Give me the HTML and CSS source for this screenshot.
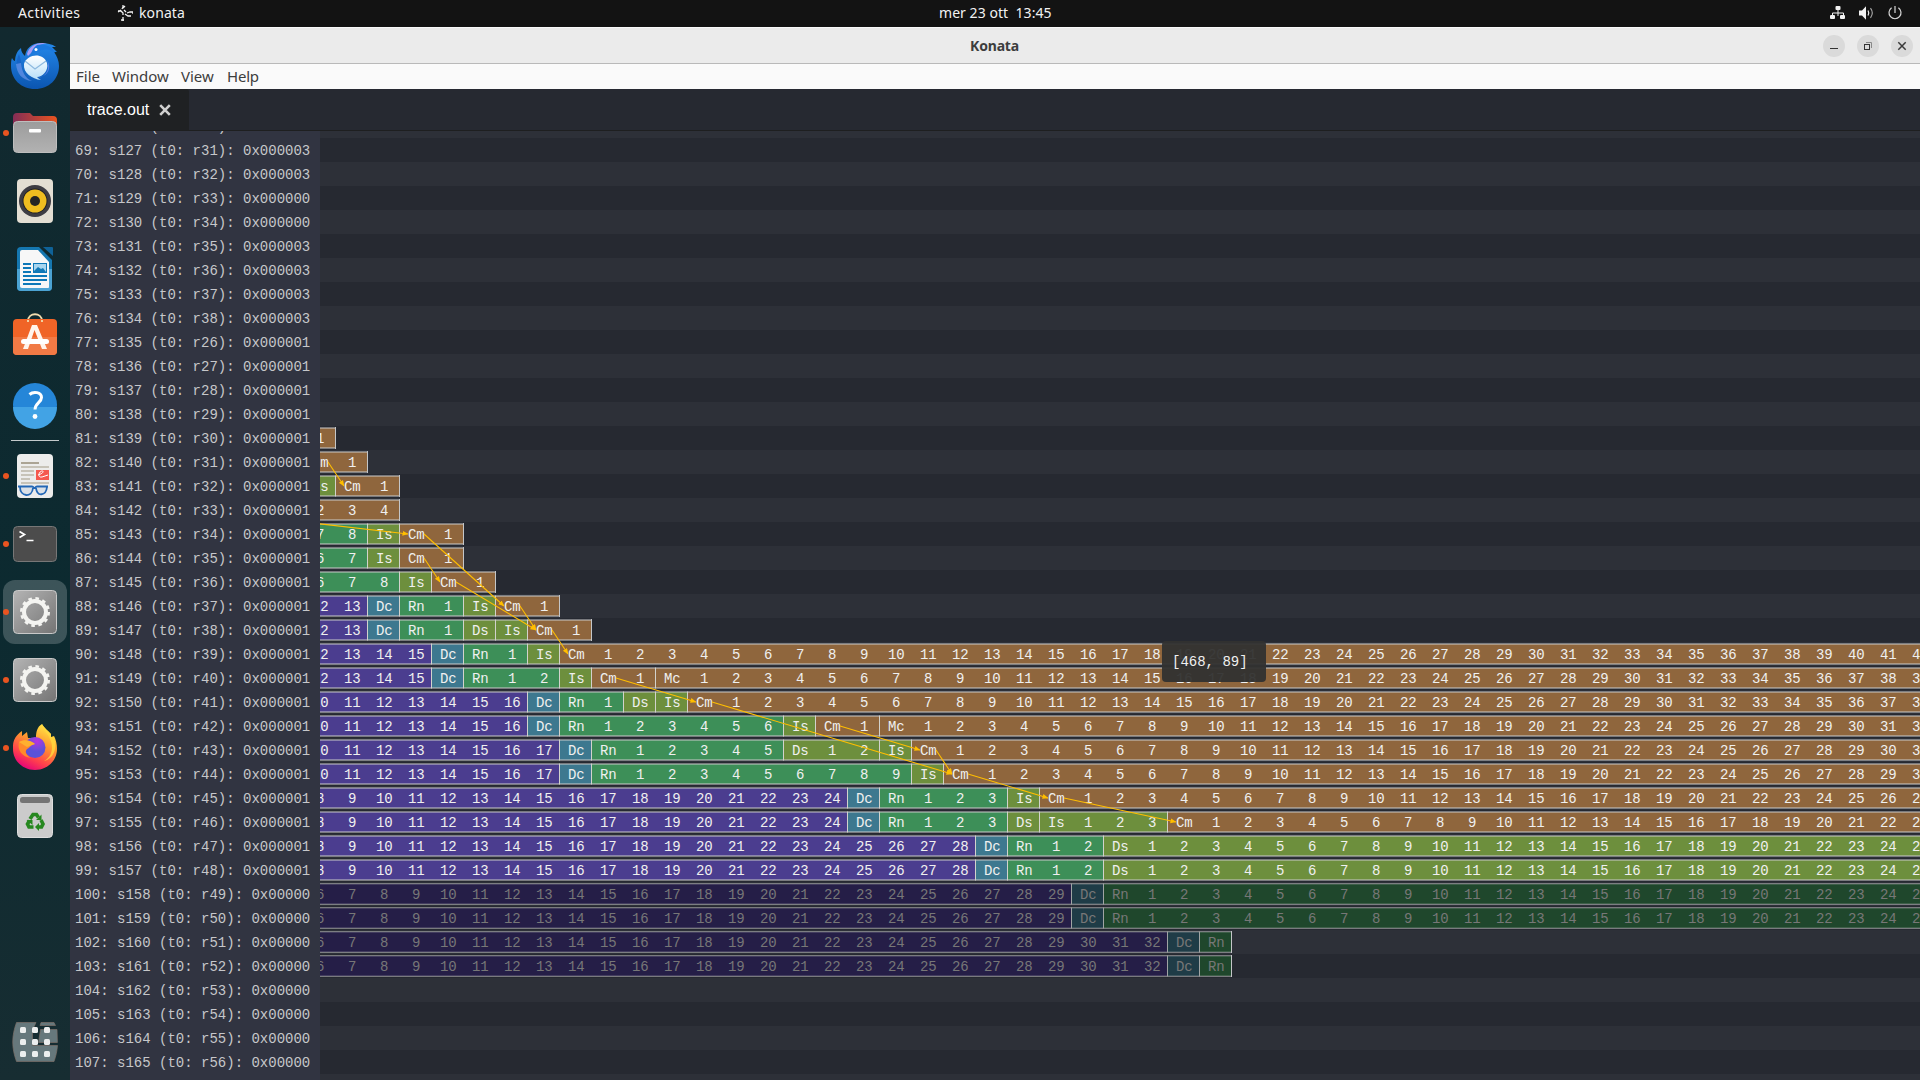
FILE: index.html
```html
<!DOCTYPE html>
<html lang="it">
<head>
<meta charset="utf-8">
<title>Konata</title>
<link rel="stylesheet" href="styles.css">
</head>
<body>
<header class="topbar">
  <span class="activities">Activities</span>
  <svg class="app-glyph" viewBox="0 0 16 16"><path d="M1 6h3l2 2v2M6 0v2L5 4M7 5l2 2M6 12v4M4 15h3M10 8l3-1h3v2M8 9l3 2h3M4 5L1 7M8 1L6 3" fill="none" stroke="#f2f2f2" stroke-width="1.3"/></svg>
  <span class="app-name">konata</span>
  <span class="clock">mer 23 ott&nbsp; 13:45</span>
  <div class="tray">
    <svg width="16" height="14" viewBox="0 0 16 14"><path d="M8 3v7M2.500 10V7h11v3" fill="none" stroke="#f2f2f2" stroke-width="1"/><rect x="5.500" y="0" width="5" height="4" rx="1" fill="#f2f2f2"/><rect x="0" y="9" width="5" height="4" rx="1" fill="#f2f2f2"/><rect x="10" y="9" width="5" height="4" rx="1" fill="#f2f2f2"/></svg>
    <svg width="16" height="14" viewBox="0 0 16 14"><path d="M0 4.500h3L7 .3v13.400L3 9.500H0z" fill="#f2f2f2"/><path d="M9 4.500q1.600 2.500 0 5" fill="none" stroke="#f2f2f2" stroke-width="1.200"/><path d="M11.500 2.200q3.600 4.800 0 9.600" fill="none" stroke="#aaa" stroke-width="1.100"/></svg>
    <svg width="14" height="14" viewBox="0 0 14 14"><path d="M3.600 1.800a6 6 0 1 0 6.800 0M7 0v7" fill="none" stroke="#d8d8d8" stroke-width="1.200"/></svg>
  </div>
</header>
<div class="desktop">
  <nav class="dock">
    <div class="launcher"><svg viewBox="0 0 48 48">
      <defs><linearGradient id="bird" x1="0" y1="0" x2="0" y2="1"><stop offset="0" stop-color="#2488ea"/><stop offset="1" stop-color="#0b55b0"/></linearGradient>
      <linearGradient id="mail" x1="0" y1="0" x2="0" y2="1"><stop offset="0" stop-color="#fff"/><stop offset="1" stop-color="#b5def8"/></linearGradient></defs>
      <path d="M1 17c1 2 2 3 3 3 0-5 2-10 6-13 0 4 2 6 4 8 1-7 6-13 16-13 6 0 11 1 15 4l-4 0 5 5-3 0c3 4 5 9 5 14 0 13-10 23-24 23S0 38 0 25c0-3 0-6 1-8z" fill="url(#bird)"/>
      <path d="M16 13c2-7 8-11 15-11h5c-7 1-12 4-15 9l-4 4z" fill="#a79cf5"/>
      <path d="M26 4c8-2 16 2 18 8-6-5-12-4-19-1l-5 2c1-4 3-7 6-9z" fill="#1b78df"/>
      <path d="M8 13c-4 8-3 17 5 23-3-8-2-15-5-23z" fill="#1565c8"/>
      <path d="M5 23c1 10 6 16 16 17-7-3-10-9-11-18z" fill="#8ba7f6" opacity=".5"/>
      <path d="M36 19c4 10-2 19-13 18 12 0 19-8 13-18z" fill="#7c8cf0" opacity=".7"/>
      <path d="M13 23c3-10 19-12 23-1 2 8-5 14-10 14 1 1 2 2 4 3-9-1-18-7-17-16z" fill="url(#mail)"/>
      <path d="M14 20l10 8 11-8" fill="none" stroke="#8db9df" stroke-width="1.200"/>
      <circle cx="25" cy="8.500" r="1.500" fill="#fff"/></svg></div>
    <div class="launcher running"><svg viewBox="0 0 48 48">
      <defs><linearGradient id="fold" x1="0" x2="1"><stop offset="0" stop-color="#842d56"/><stop offset="1" stop-color="#e95420"/></linearGradient>
      <linearGradient id="gray" x1="0" y1="0" x2="1" y2="1"><stop offset="0" stop-color="#b4b4b4"/><stop offset="1" stop-color="#747474"/></linearGradient>
      <linearGradient id="drawer" x1="0" y1="0" x2="0" y2="1"><stop offset="0" stop-color="#9c9c9c"/><stop offset="1" stop-color="#b2b2b2"/></linearGradient></defs>
      <path d="M2 8q0-4 4-4h13l3 3h20q4 0 4 4v12H2z" fill="url(#fold)"/>
      <rect x="2.500" y="12.500" width="43" height="31" rx="4" fill="url(#drawer)" stroke="#bebebe"/>
      <rect x="18" y="20" width="12" height="3.500" rx="1" fill="#fff"/></svg></div>
    <div class="launcher"><svg viewBox="0 0 48 48">
      <rect x="6" y="2" width="36" height="44" rx="4" fill="#e3ded3"/>
      <circle cx="24" cy="24" r="16" fill="#3e3d44"/><circle cx="24" cy="24" r="12.500" fill="#202127"/><circle cx="24" cy="24" r="11.500" fill="#efbd20"/><circle cx="24" cy="24" r="5" fill="#242424"/></svg></div>
    <div class="launcher"><svg viewBox="0 0 48 48">
      <path d="M10 2h18l13 13v27q0 4-4 4H10q-4 0-4-4V6q0-4 4-4z" fill="#1577b0"/>
      <path d="M6 24h35v18q0 4-4 4H10q-4 0-4-4z" fill="#4ba3d3"/>
      <path d="M11 5h16l11 12v25q0 1-1 1H11q-2 0-2-2V7q0-2 2-2z" fill="#f7f7f7"/>
      <path d="M32 2h9q1 0 1 1v8z" fill="#0f6297"/>
      <path d="M12 19h8M12 23h8M12 27h8M12 31h24M12 35h24M12 39h18" stroke="#0d78b8" stroke-width="2"/>
      <rect x="22.500" y="18.500" width="13" height="9" fill="#a9d6ef" stroke="#0d78b8"/><path d="M23 26l4-4 3 2 2-1 3 4H23z" fill="#1279b7"/></svg></div>
    <div class="launcher"><svg viewBox="0 0 48 48">
      <path d="M17 8c0-9 14-9 14 0" fill="none" stroke="#f0dcae" stroke-width="1.800"/>
      <rect x="2" y="6" width="44" height="36" rx="4" fill="#f06427"/><path d="M2 24h44v14q0 4-4 4H6q-4 0-4-4z" fill="#f17a45"/>
      <path d="M17 7v2M31 7v2" stroke="#f0dcae" stroke-width="1.800"/>
      <path d="M21 12h5l10 24h-5L23.500 17 17 36h-5z" fill="#fff4ec"/><rect x="10" y="26" width="28" height="5" rx="2.500" fill="#fff"/></svg></div>
    <div class="launcher"><svg viewBox="0 0 48 48">
      <circle cx="24" cy="24" r="22" fill="#2586d8"/><path d="M2 26h44a22 22 0 0 1-44 0z" fill="#42a3e5"/>
      <path d="M18.500 13.500c4-3.500 12-2.500 12 3 0 5-6.500 5.500-6.500 12" fill="none" stroke="#fff" stroke-width="3"/><circle cx="24" cy="35.500" r="2.400" fill="#fff"/></svg></div>
    <div class="divider"></div>
    <div class="launcher running"><svg viewBox="0 0 48 48">
      <rect x="6" y="2" width="36" height="44" rx="4" fill="#ececeb"/>
      <path d="M10 11h18" stroke="#aba494" stroke-width="2"/><path d="M10 15h28M10 19h13M10 23h13M10 27h9M10 31h28" stroke="#c7c3b8" stroke-width="2"/>
      <rect x="25" y="18" width="13" height="10" fill="#f5584e"/><path d="M27 23c4-1 7-4 4-4s-5 7 0 6l6-2" fill="none" stroke="#fff"/>
      <path d="M7 34.500h14q1 0 2 1.500h1q1-1.500 2-1.500h11M9 35c0 10 12 11 13 1M25 36c1 9 10 8 11-1" fill="#cfd9e4" fill-opacity=".6" stroke="#2367b5" stroke-width="1.800"/></svg></div>
    <div class="launcher running"><svg viewBox="0 0 48 48">
      <rect x="2.500" y="6.500" width="43" height="35" rx="4" fill="#4c4c4c" stroke="#777"/>
      <path d="M8.500 11.500l5 3-5 3M15.500 20.500h7" fill="none" stroke="#fff" stroke-width="1.700"/></svg></div>
    <div class="launcher running focused"><svg viewBox="0 0 48 48"><rect x="2.500" y="2.500" width="43" height="43" rx="4" fill="url(#gray)" stroke="#c9c9c9"/><circle cx="24" cy="24" r="11" fill="none" stroke="#f4f4f1" stroke-width="4"/><circle cx="24" cy="24" r="13.700" fill="none" stroke="#f4f4f1" stroke-width="2.600" stroke-dasharray="3.600 3.573"/></svg></div>
    <div class="launcher running"><svg viewBox="0 0 48 48"><rect x="2.500" y="2.500" width="43" height="43" rx="4" fill="url(#gray)" stroke="#c9c9c9"/><circle cx="24" cy="24" r="11" fill="none" stroke="#f4f4f1" stroke-width="4"/><circle cx="24" cy="24" r="13.700" fill="none" stroke="#f4f4f1" stroke-width="2.600" stroke-dasharray="3.600 3.573"/></svg></div>
    <div class="launcher running"><svg viewBox="0 0 48 48">
      <defs><linearGradient id="fox" x1=".8" y1="0" x2=".3" y2="1"><stop offset="0" stop-color="#fff04a"/><stop offset=".4" stop-color="#ff9a2e"/><stop offset=".75" stop-color="#ff3f4d"/><stop offset="1" stop-color="#e4007c"/></linearGradient>
      <radialGradient id="globe" cx=".6" cy=".2"><stop offset="0" stop-color="#b833e1"/><stop offset="1" stop-color="#5b52d8"/></radialGradient></defs>
      <path d="M2 22c0-6 3-11 9-15l0 5 5-4 1 6h8c0-6 1-11 6-14 3 5 6 6 9 10v3l3-1c2 4 3 8 3 13 0 12-10 21-22 21S2 37 2 25z" fill="url(#fox)"/>
      <path d="M31 0c0 6 6 9 8 15 4 8 2 18-6 22 9-2 14-12 10-24l-3 0v-3C36 7 33 4 31 0z" fill="#ffd83d" opacity=".8"/>
      <circle cx="24" cy="23.500" r="10.500" fill="url(#globe)"/>
      <path d="M8 18c5-3 9-2 16 2-4 0-5 4-8 5-3 3 0 7 4 9C11 33 6 26 8 18z" fill="#ff8a2a"/><path d="M8 18c5-3 12-2 16 2l-8 3z" fill="#ffb02f"/></svg></div>
    <div class="launcher"><svg viewBox="0 0 48 48">
      <rect x="6.500" y="2.500" width="35" height="43" rx="4" fill="#cbcbcb" stroke="#dedede"/><rect x="9" y="5" width="30" height="6" rx="2.500" fill="#747474"/>
      <g fill="none" stroke="#26881f" stroke-width="3.600"><path d="M19 27l3-4.500h3.500l2 3"/><path d="M30 28l2 4-1.500 3h-3"/><path d="M22.500 35H18l-1.500-3 2-3.500"/></g><path d="M30.500 22.500V28H25zM28 31v8l-4-4zM15.500 28h6v5z" fill="#26881f"/></svg></div>
    <div class="launcher app-grid"><svg viewBox="0 0 48 48">
      <path d="M5.500 4.500H25L21.500 12v15.500H46.500C46 33 45 38 43 43.500H5.500C.5 30 .5 18 5.500 4.500zM30 4.500H43l1.500 3H29zM29.500 11.500H46l.4 13H27.500z" fill="#66787c" stroke="#7d7068" stroke-width=".7"/>
      <g fill="#eceeee"><rect x="9" y="9" width="6" height="6" rx="1.500"/><rect x="21" y="9" width="6" height="6" rx="1.500"/><rect x="33" y="9" width="6" height="6" rx="1.500"/><rect x="9" y="21" width="6" height="6" rx="1.500"/><rect x="21" y="21" width="6" height="6" rx="1.500"/><rect x="33" y="21" width="6" height="6" rx="1.500"/><rect x="9" y="33" width="6" height="6" rx="1.500"/><rect x="21" y="33" width="6" height="6" rx="1.500"/><rect x="33" y="33" width="6" height="6" rx="1.500"/></g></svg></div>
  </nav>
  <main class="window">
    <div class="titlebar">
      <span class="title">Konata</span>
      <div class="controls">
        <button class="control"><svg viewBox="0 0 22 22"><path d="M7 13.500h8" stroke="#333"/></svg></button>
        <button class="control"><svg viewBox="0 0 22 22"><rect x="7.500" y="9.500" width="5" height="5" fill="none" stroke="#333"/><path d="M9 7.500h5.500V13" fill="none" stroke="#888"/></svg></button>
        <button class="control"><svg viewBox="0 0 22 22"><path d="M7.300 7.300l7.400 7.400M14.700 7.300l-7.400 7.400" stroke="#3a3a3a" stroke-width="1.500"/></svg></button>
      </div>
    </div>
    <div class="menubar"><span class="m-file">File</span><span class="m-window">Window</span><span class="m-view">View</span><span class="m-help">Help</span></div>
    <div class="tabs">
      <div class="tab">trace.out<svg viewBox="0 0 12 12"><path d="M1.200 1.200l9.600 9.600M10.800 1.200L1.200 10.800" stroke="#d0d0d0" stroke-width="2.600"/></svg></div>
    </div>
    <div class="viewer">
      <div class="labels" id="labels"></div>
      <div class="timeline">
        <div class="rows" id="rows"></div>
        <svg class="arrows" id="arrows" width="1600" height="966"><defs><marker id="head" markerUnits="userSpaceOnUse" markerWidth="7" markerHeight="6" refX="5.500" refY="2.500" orient="auto"><path d="M0 0l6 2.500L0 5z" fill="#ffbe00"/></marker></defs></svg>
        <div class="tooltip">[468, 89]</div>
      </div>
    </div>
  </main>
</div>
<script src="app.js"></script>
</body>
</html>
```
FILE: styles.css
```css
* { box-sizing: border-box; }
body { margin: 0; width: 1920px; height: 1080px; overflow: hidden; background: #262931; font-family: "Noto Sans", sans-serif; display: flex; flex-direction: column; }
svg { display: block; }
.topbar { height: 27px; flex: none; background: #131313; color: #f2f2f2; display: flex; align-items: center; position: relative; font-size: 14px; line-height: 25px; padding: 0 18px 2px 18px; }
.activities { width: 62px; letter-spacing: 0.4px; margin-right: 37px; white-space: nowrap; }
.app-glyph { width: 16px; height: 16px; margin-right: 6px; }
.app-name { letter-spacing: 0.1px; }
.clock { position: absolute; top: 0; left: 939px; letter-spacing: 0.05px; white-space: nowrap; }
.tray { margin-left: auto; display: flex; gap: 13px; align-items: center; }
.desktop { flex: 1; min-height: 0; display: flex; }
.dock { width: 70px; flex: none; background: linear-gradient(180deg, #12292f, #0c2a30 55%, #172d32); display: flex; flex-direction: column; padding: 4px 0; }
.launcher { width: 70px; height: 68px; flex: none; display: flex; align-items: center; justify-content: center; position: relative; }
.launcher svg { width: 48px; height: 48px; position: relative; }
.running::before { content: ""; position: absolute; z-index: 1; left: 3px; top: 31px; width: 6px; height: 6px; border-radius: 50%; background: #e95420; }
.focused::after { content: ""; position: absolute; left: 3px; top: 2px; width: 64px; height: 64px; border-radius: 12px; background: rgba(255, 255, 255, 0.2); }
.focused svg { z-index: 1; }
.divider { height: 1px; margin: 1px 11px; flex: none; background: #c3cacb; }
.app-grid { margin-top: auto; }
.window { flex: 1; min-width: 0; display: flex; flex-direction: column; }
.titlebar { height: 37px; flex: none; background: #ebebeb; border-top: 1px solid #f8f8f8; border-bottom: 1px solid #b9b9b9; display: flex; align-items: center; justify-content: flex-end; position: relative; }
.title { position: absolute; left: 0; right: 1px; text-align: center; font-weight: 700; font-size: 14px; line-height: 34px; color: #3d3d3d; letter-spacing: -0.2px; }
.controls { display: flex; gap: 12px; padding-right: 7px; position: relative; }
.control { width: 22px; height: 22px; padding: 0; border: 0; border-radius: 50%; background: #dadada; }
.menubar { height: 25px; flex: none; background: #fafafa; color: #3d3d3d; font-size: 15px; line-height: 25px; display: flex; padding-left: 6px; }
.m-file { width: 36px; }
.m-window { width: 69px; }
.m-view { width: 46px; }
.m-help { letter-spacing: -0.2px; }
.tabs { height: 42px; flex: none; background: #262931; border-bottom: 1px solid #1e1f20; display: flex; }
.tab { width: 119px; background: #1f2123; border-radius: 0 3px 0 0; color: #fff; font: 16px/41px "Liberation Sans", Arial, sans-serif; padding-left: 17px; display: flex; align-items: center; }
.tab svg { width: 12px; height: 12px; margin-left: 10px; }
.viewer { flex: 1; min-height: 0; display: flex; overflow: hidden; font: 14px/24px "Liberation Mono", monospace; }
.labels { width: 250px; flex: none; background: #313441; color: #c6c7ca; padding-left: 5px; overflow: hidden; }
.label { height: 24px; line-height: 26px; white-space: pre; }
.label:first-child, .row:first-child { margin-top: -17px; }
.timeline { flex: 1; min-width: 0; overflow: hidden; position: relative; }
.row { height: 24px; padding-top: 1px; display: flex; background: #2d3038; }
.row.odd { background: #262931; }
.bar { display: flex; flex: none; margin-left: -17px; }
.bar.closed { border-right: 1px solid #c4c6c8; height: 22px; }
.stage { height: 22px; flex: none; display: flex; color: #f0f0f0; border: 1px solid rgba(204, 204, 204, 0.5); border-left-color: #d2d2cc; border-right: 0; background-clip: padding-box; box-shadow: inset 0 1px rgba(204, 204, 204, 0.5), inset 0 -1px rgba(204, 204, 204, 0.5); line-height: 22px; }
.cell { width: 32px; height: 20px; flex: none; text-align: center; padding-left: 2.6px; }
.cell:first-child { margin-left: -1px; }
.F { background-color: #4b3d8f; }
.Dc { background-color: #3d788f; }
.Rn { background-color: #3d8f58; }
.Ds, .Is { background-color: #6d8f3d; }
.Cm, .Mc { background-color: #8f663d; }
.flushed .stage { color: #777; box-shadow: inset 0 1px rgba(204, 204, 204, 0.18), inset 0 -1px rgba(204, 204, 204, 0.18); border-left-color: #a0a4a4; }
.flushed .F { background-color: #251e47; }
.flushed .Dc { background-color: #1f3c47; }
.flushed .Rn { background-color: #1f472c; }
.arrows { position: absolute; left: 0; top: -17px; }
.arrows line { stroke: #ffbe00; stroke-width: 1.1; }
.tooltip { position: absolute; left: 842px; top: 510px; width: 104px; height: 41px; border-radius: 4px; background: rgba(50, 50, 48, 0.95); color: #f0f0f0; padding-left: 10px; line-height: 42px; }
```
FILE: app.js
```js
const FIRST = 68, LAST = 108, COLS = 51, CELL = 32, ORIGIN = -17;

// Each bar is a list of [stage, first counter, number of cells]; no count runs to the right edge.
const bars = {
  81: [['Cm', 1, 1]],
  82: [['Cm', 0, 2]],
  83: [['Is', 0, 1], ['Cm', 0, 2]],
  84: [['Cm', 2, 3]],
  85: [['Rn', 7, 2], ['Is', 0, 1], ['Cm', 0, 2]],
  86: [['Rn', 6, 2], ['Is', 0, 1], ['Cm', 0, 2]],
  87: [['Rn', 6, 3], ['Is', 0, 1], ['Cm', 0, 2]],
  88: [['F', 12, 2], ['Dc', 0, 1], ['Rn', 0, 2], ['Is', 0, 1], ['Cm', 0, 2]],
  89: [['F', 12, 2], ['Dc', 0, 1], ['Rn', 0, 2], ['Ds', 0, 1], ['Is', 0, 1], ['Cm', 0, 2]],
  90: [['F', 12, 4], ['Dc', 0, 1], ['Rn', 0, 2], ['Is', 0, 1], ['Cm', 0]],
  91: [['F', 12, 4], ['Dc', 0, 1], ['Rn', 0, 3], ['Is', 0, 1], ['Cm', 0, 2], ['Mc', 0]],
  92: [['F', 10, 7], ['Dc', 0, 1], ['Rn', 0, 2], ['Ds', 0, 1], ['Is', 0, 1], ['Cm', 0]],
  93: [['F', 10, 7], ['Dc', 0, 1], ['Rn', 0, 7], ['Is', 0, 1], ['Cm', 0, 2], ['Mc', 0]],
  94: [['F', 10, 8], ['Dc', 0, 1], ['Rn', 0, 6], ['Ds', 0, 3], ['Is', 0, 1], ['Cm', 0]],
  95: [['F', 10, 8], ['Dc', 0, 1], ['Rn', 0, 10], ['Is', 0, 1], ['Cm', 0]],
  96: [['F', 8, 17], ['Dc', 0, 1], ['Rn', 0, 4], ['Is', 0, 1], ['Cm', 0]],
  97: [['F', 8, 17], ['Dc', 0, 1], ['Rn', 0, 4], ['Ds', 0, 1], ['Is', 0, 4], ['Cm', 0]],
  98: [['F', 8, 21], ['Dc', 0, 1], ['Rn', 0, 3], ['Ds', 0]],
  99: [['F', 8, 21], ['Dc', 0, 1], ['Rn', 0, 3], ['Ds', 0]],
  100: [['F', 6, 24], ['Dc', 0, 1], ['Rn', 0]],
  101: [['F', 6, 24], ['Dc', 0, 1], ['Rn', 0]],
  102: [['F', 6, 27], ['Dc', 0, 1], ['Rn', 0, 1]],
  103: [['F', 6, 27], ['Dc', 0, 1], ['Rn', 0, 1]],
};

// Dependencies: [from row, from column, to row, to column].
const deps = [
  [82, 0, 83, 1], [84, -4, 85, 3], [85, 3, 88, 6], [86, 3, 87, 4], [87, 4, 89, 7],
  [88, 6, 89, 7], [89, 7, 90, 8], [91, 9, 92, 12], [92, 12, 95, 20], [93, 16, 94, 19],
  [94, 19, 95, 20], [95, 20, 96, 23], [96, 23, 97, 27],
];

function address(n) {
  if (n > 99) return '0x00000';
  if (n > 76) return '0x000001';
  return n === 71 || n === 72 ? '0x000000' : '0x000003';
}

function div(cls, text) {
  const el = document.createElement('div');
  el.className = cls;
  if (text !== undefined) el.textContent = text;
  return el;
}

const labels = document.getElementById('labels');
const rows = document.getElementById('rows');
for (let n = FIRST; n <= LAST; n++) {
  const reg = n < 77 ? n - 38 : n - 51;
  if (n < LAST) labels.append(div('label', `${n}: s${n + 58} (t0: r${reg}): ${address(n)}`));
  const row = div('row' + (n % 2 ? ' odd' : '') + (n > 99 ? ' flushed' : ''));
  if (bars[n]) {
    const bar = div('bar');
    let col = 0;
    for (const [name, start, length] of bars[n]) {
      const count = length || COLS - col;
      const stage = div('stage ' + name);
      stage.style.width = count * CELL + 'px';
      for (let i = start; i < start + count; i++) stage.append(div('cell', i || name));
      bar.append(stage);
      col += count;
    }
    if (col < COLS) bar.classList.add('closed');
    row.append(bar);
  }
  rows.append(row);
}

const arrows = document.getElementById('arrows');
for (const [r1, c1, r2, c2] of deps) {
  const line = document.createElementNS('http://www.w3.org/2000/svg', 'line');
  line.setAttribute('x1', ORIGIN + c1 * CELL + 25);
  line.setAttribute('y1', (r1 - FIRST) * 24 + 12);
  line.setAttribute('x2', ORIGIN + c2 * CELL + 9);
  line.setAttribute('y2', (r2 - FIRST) * 24 + 12);
  line.setAttribute('marker-end', 'url(#head)');
  arrows.append(line);
}
```
